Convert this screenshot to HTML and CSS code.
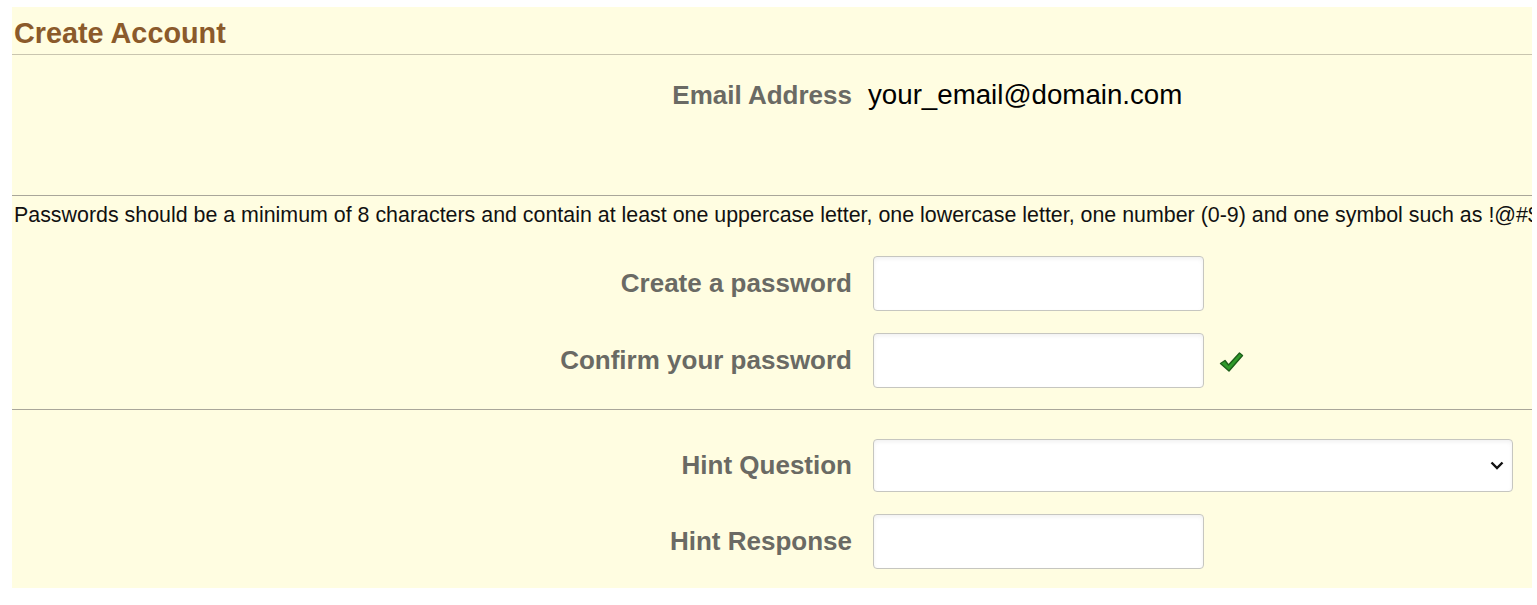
FILE: index.html
```html
<!DOCTYPE html>
<html>
<head>
<meta charset="utf-8">
<link rel="stylesheet" href="styles.css">
</head>
<body>
<div class="panel">
  <h1 class="title">Create Account</h1>
  <div class="section email-section">
    <div class="row email-row">
      <span class="label">Email Address</span>
      <span class="value">your_email@domain.com</span>
    </div>
  </div>
  <div class="section pw-section">
    <p class="note">Passwords should be a minimum of 8 characters and contain at least one uppercase letter, one lowercase letter, one number (0-9) and one symbol such as !@#$%^&amp;*</p>
    <div class="row">
      <label class="label">Create a password</label>
      <div class="field"><input class="box" type="password"></div>
    </div>
    <div class="row">
      <label class="label">Confirm your password</label>
      <div class="field">
        <input class="box confirm" type="password">
        <svg class="check" viewBox="0 0 26 22" width="26" height="22"><path d="M2.5 12.5 L7 9.5 L10.5 14 L21.5 2 L24.5 4.5 L11 20 Z" fill="#2f9a2a" stroke="#1d5e1a" stroke-width="1.4" stroke-linejoin="round"/></svg>
      </div>
    </div>
  </div>
  <div class="section hint-section">
    <div class="row">
      <label class="label">Hint Question</label>
      <div class="field">
        <div class="box select">
          <svg class="chev" viewBox="0 0 14 9" width="14" height="9"><path d="M1.5 1.5 L7 7 L12.5 1.5" fill="none" stroke="#111" stroke-width="2.4"/></svg>
        </div>
      </div>
    </div>
    <div class="row">
      <label class="label">Hint Response</label>
      <div class="field"><input class="box" type="text"></div>
    </div>
  </div>
</div>
</body>
</html>
```
FILE: styles.css
```css
html, body {
  margin: 0;
  padding: 0;
  background: #ffffff;
}
body {
  padding: 7px 5px 0 12px;
  font-family: "Liberation Sans", Arial, sans-serif;
}
.panel {
  background: #fffde1;
  height: 581px;
  overflow: hidden;
}
.title {
  margin: 0;
  height: 48px;
  box-sizing: border-box;
  padding: 9px 0 0 2px;
  font-size: 28.8px;
  line-height: 34px;
  font-weight: bold;
  color: #8b5a2b;
  border-bottom: 1px solid #c9c5af;
}
.section {
  border-bottom: 1px solid #a9a69a;
  box-sizing: border-box;
}
.email-section {
  height: 141px;
  padding-top: 24px;
}
.row {
  display: grid;
  grid-template-columns: 840px 1fr;
  column-gap: 21px;
  align-items: center;
}
.label {
  text-align: right;
  font-size: 26px;
  font-weight: bold;
  color: #6a6a64;
}
.email-row {
  height: 30px;
}
.value {
  font-size: 27.7px;
  color: #000;
  margin-left: -5px;
}
.pw-section {
  height: 214px;
  padding-top: 7px;
}
.note {
  margin: 0 0 29px 2px;
  font-size: 21.4px;
  line-height: 24px;
  color: #111;
  white-space: nowrap;
}
.pw-section .row + .row,
.hint-section .row + .row {
  margin-top: 22px;
}
.field {
  display: flex;
  align-items: center;
}
.box {
  box-sizing: border-box;
  width: 331px;
  height: 55px;
  margin: 0;
  border: 1px solid #c6c6c0;
  border-radius: 4px;
  background: #ffffff;
  box-shadow: inset 0 2px 4px rgba(0, 0, 0, 0.06);
  outline: none;
}
.check {
  margin-left: 14px;
  margin-top: 3px;
}
.hint-section {
  border-bottom: none;
  padding-top: 29px;
}
.select {
  width: 640px;
  height: 53px;
  display: flex;
  align-items: center;
  justify-content: flex-end;
  padding-right: 8px;
}
.chev {
  display: block;
}
```
